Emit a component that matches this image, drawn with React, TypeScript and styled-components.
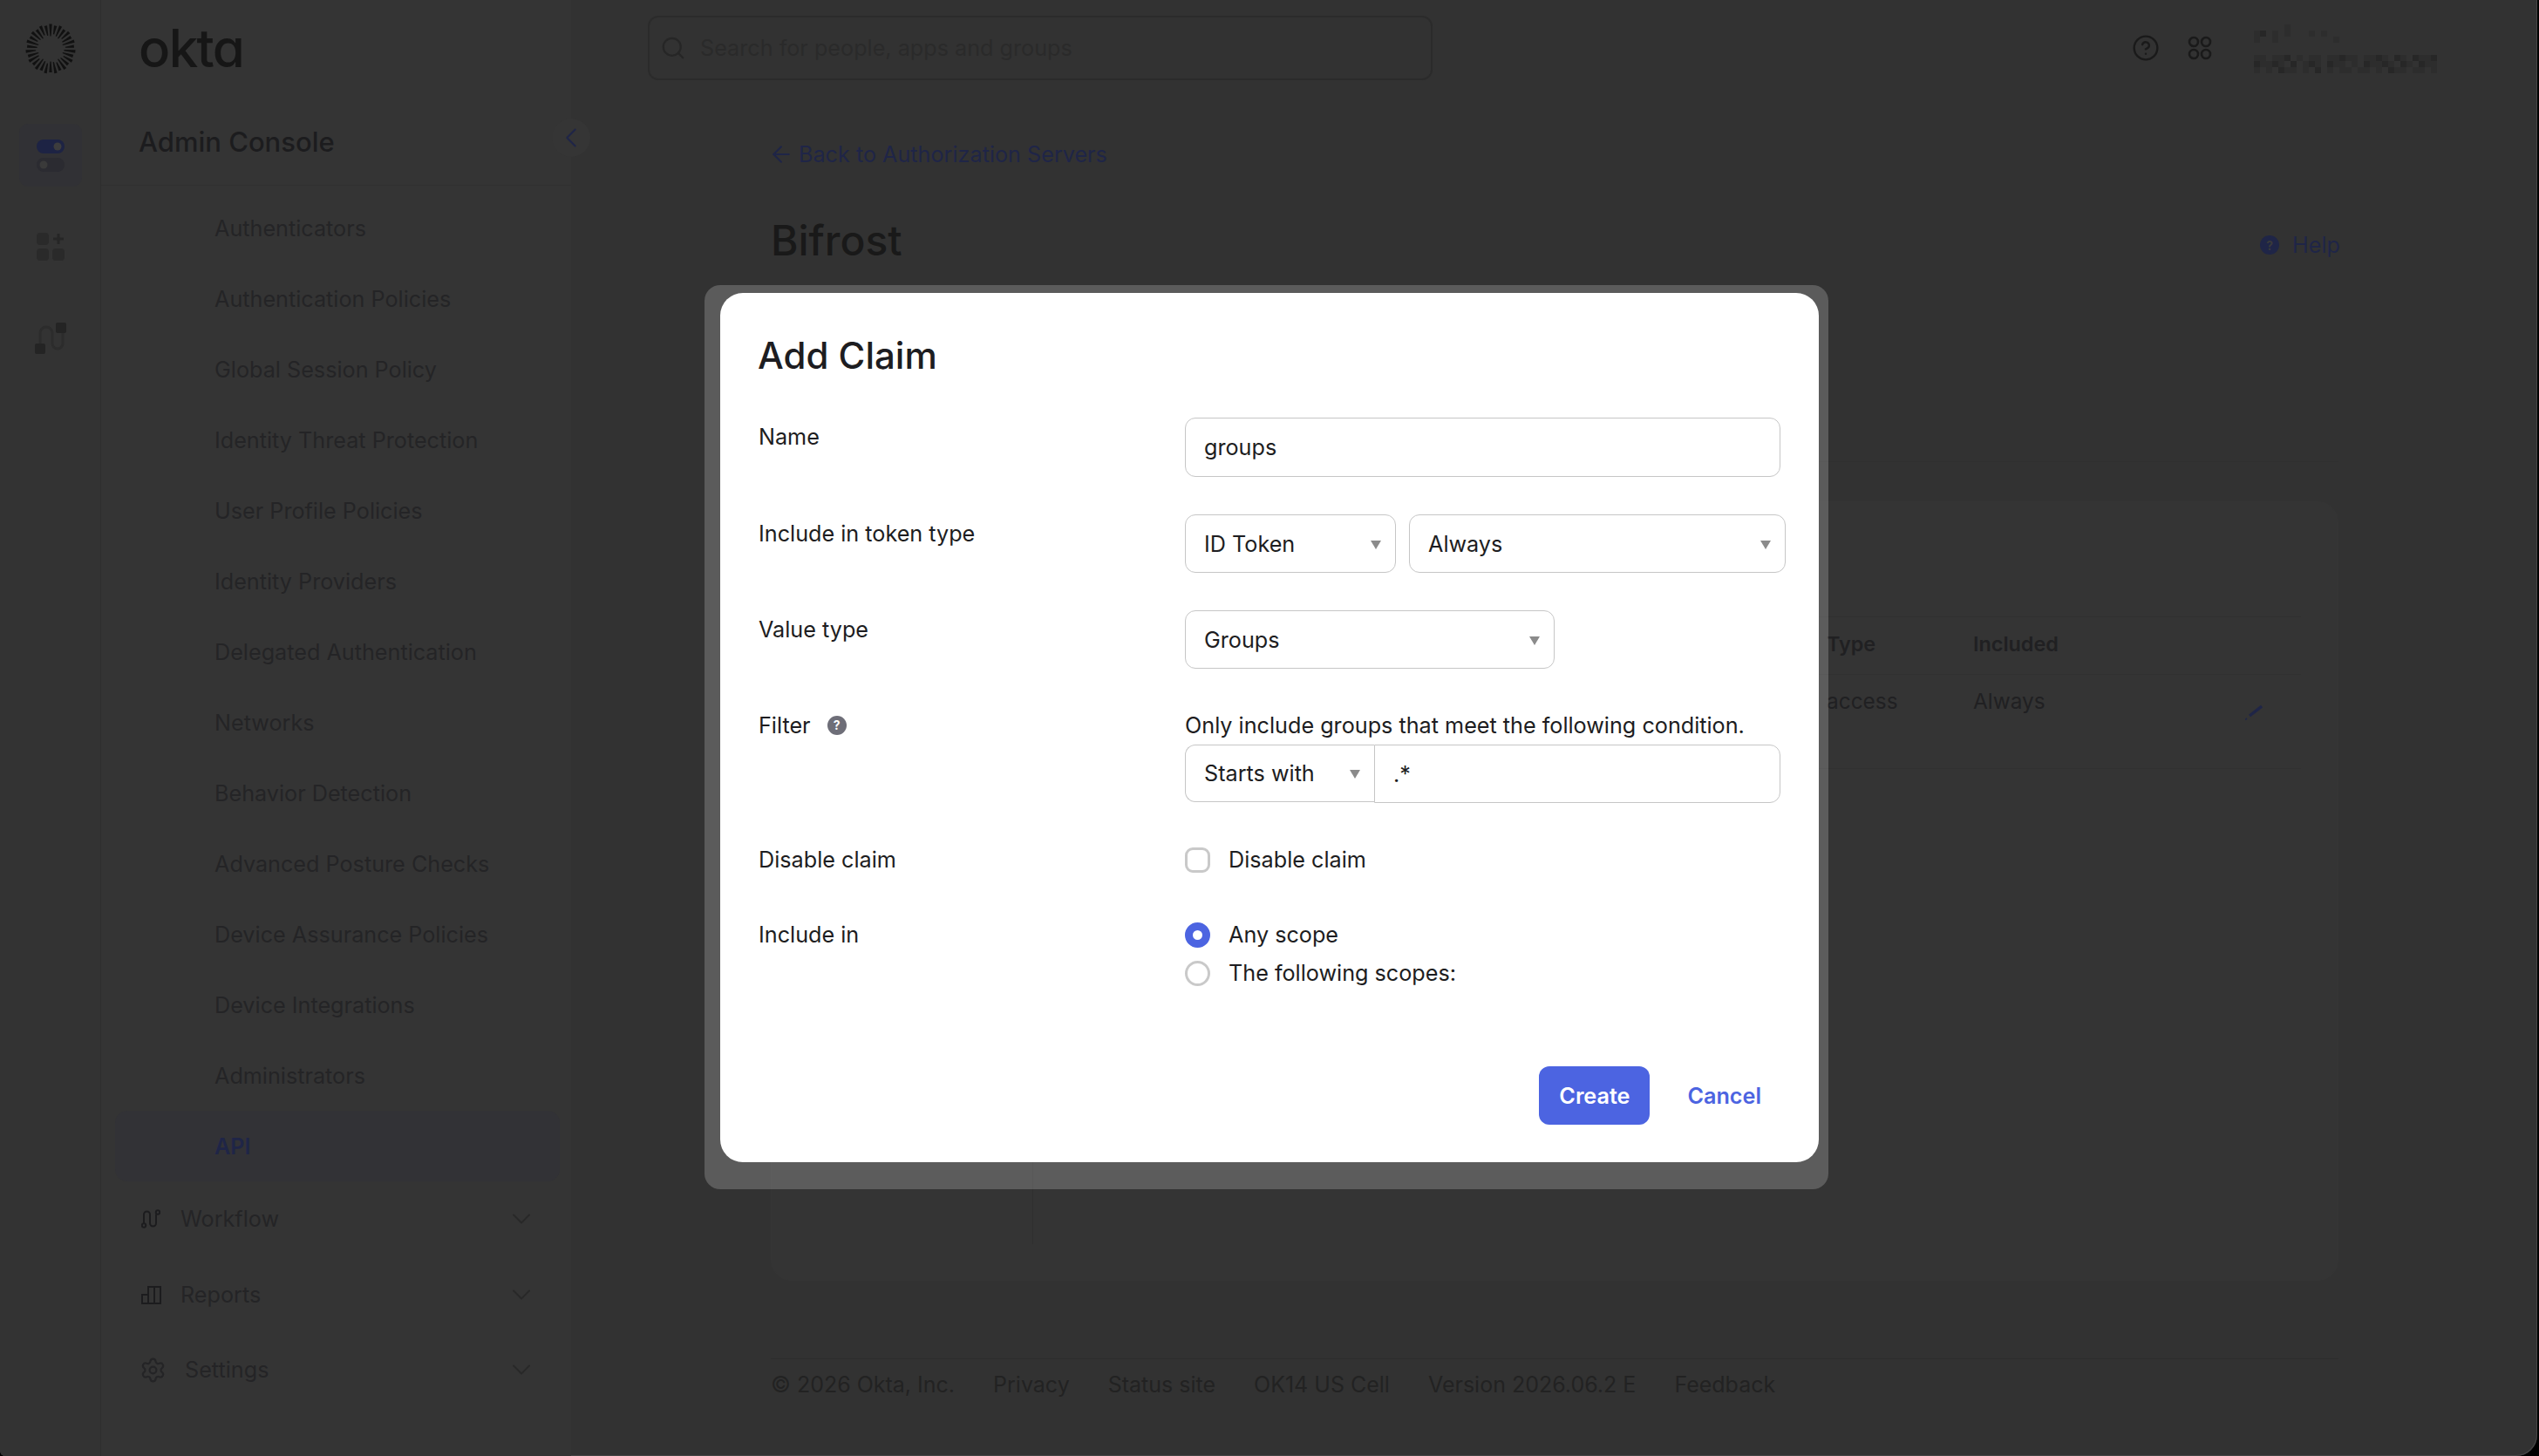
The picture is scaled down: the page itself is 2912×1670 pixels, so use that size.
import React from "react";
import styled, { createGlobalStyle } from "styled-components";
import { ArrowLeft, ChevronDown, ChevronLeft, CircleHelp, Search, Settings } from "lucide-react";

const GlobalStyle = createGlobalStyle`
  html, body {
    margin: 0;
    padding: 0;
    background: #000;
  }
  * {
    box-sizing: border-box;
  }
  body {
    font-family: Inter, "Liberation Sans", sans-serif;
    -webkit-font-smoothing: antialiased;
  }
`;

const ink = "#1c1c1e";
const softInk = "#242426";
const navy = "#1f2547";
const blue = "#4c64e1";
const line = "#c6c6c6";

const Screen = styled.div`
  position: relative;
  width: 2912px;
  height: 1670px;
  overflow: hidden;
  background: #000;
`;

const AppWindow = styled.div`
  display: flex;
  width: 2910px;
  height: 1670px;
  overflow: hidden;
  background: #323232;
  border-radius: 0 0 24px 6px;
  box-shadow: inset -1px -1px 0 #454545;
`;

const Rail = styled.aside`
  display: flex;
  flex: 0 0 116px;
  flex-direction: column;
  align-items: center;
  padding-top: 27px;
  gap: 33px;
  border-right: 1px solid #2e2e2e;
  background: #333;
`;

const LogoBox = styled.div`
  display: flex;
  height: 83px;
  margin-bottom: -1px;
`;

const RailButton = styled.div<{ $active?: boolean }>`
  display: flex;
  align-items: center;
  justify-content: center;
  width: 72px;
  height: 72px;
  border-radius: 10px;
  background: ${(p) => (p.$active ? "#313135" : "transparent")};
`;

const Sidebar = styled.aside`
  position: relative;
  display: flex;
  flex: 0 0 539px;
  flex-direction: column;
  background: #343434;
`;

const Brand = styled.div`
  height: 110px;
  padding: 19px 0 0 43px;
  color: #161616;
  font-size: 60px;
  font-weight: 500;
  line-height: 72px;
  letter-spacing: -1.6px;
  font-feature-settings: "cv11";
`;

const ConsoleHead = styled.div`
  height: 103px;
  padding: 33px 0 0 43px;
  border-bottom: 1px solid #303030;
  color: ${ink};
  font-size: 31px;
  font-weight: 500;
  line-height: 40px;
`;

const CollapseButton = styled.div`
  position: absolute;
  top: 136px;
  right: -22px;
  display: flex;
  align-items: center;
  justify-content: center;
  width: 44px;
  height: 44px;
  border-radius: 50%;
  background: #353535;
  color: ${navy};
`;

const NavList = styled.nav`
  display: flex;
  flex-direction: column;
  padding-top: 8px;
`;

const NavItem = styled.div<{ $active?: boolean }>`
  display: flex;
  align-items: center;
  width: 510px;
  height: 81px;
  margin-left: 16px;
  padding-left: 114px;
  border-radius: 14px;
  background: ${(p) => (p.$active ? "#323236" : "transparent")};
  color: ${(p) => (p.$active ? navy : softInk)};
  font-size: 25.2px;
  font-weight: ${(p) => (p.$active ? 600 : 400)};
`;

const GroupRow = styled.div`
  display: flex;
  align-items: center;
  height: 86.5px;
  padding: 0 39px 0 46px;
  color: ${softInk};
  font-size: 25.2px;
`;

const GroupIcon = styled.span<{ $width: number }>`
  display: flex;
  flex: 0 0 ${(p) => p.$width}px;
  align-items: center;
`;

const GearIcon = styled(Settings)`
  margin-left: -2px;
`;

const GroupCaret = styled(ChevronDown)`
  margin-left: auto;
  color: #282828;
`;

const Main = styled.main`
  display: flex;
  flex: 1;
  flex-direction: column;
  min-width: 0;
`;

const TopBar = styled.header`
  display: flex;
  flex: 0 0 110px;
  align-items: center;
  padding: 0 115px 0 88px;
`;

const SearchBox = styled.div`
  display: flex;
  align-items: center;
  width: 900px;
  height: 74px;
  padding-left: 12px;
  gap: 16px;
  border: 2px solid #2b2b2b;
  border-radius: 12px;
  color: #262626;
  font-size: 25.2px;
`;

const Placeholder = styled.span`
  color: #2a2a2a;
`;

const TopActions = styled.div`
  display: flex;
  align-items: center;
  margin-left: auto;
  color: #1a1a1a;
`;

const AppsIcon = styled.svg`
  margin-left: 32px;
`;

const Mosaic = styled.svg`
  margin: 2px 0 0 48px;
`;

const Content = styled.div`
  display: flex;
  flex-direction: column;
  padding: 49px 0 0 229px;
  width: 2027px;
`;

const BackLink = styled.div`
  display: flex;
  align-items: center;
  height: 36px;
  gap: 5px;
  color: ${navy};
  font-size: 25.2px;
`;

const BackArrow = styled(ArrowLeft)`
  margin-left: -3px;
`;

const TitleRow = styled.div`
  display: flex;
  align-items: center;
  justify-content: space-between;
  height: 60px;
  margin-top: 51px;
`;

const PageTitle = styled.h1`
  margin: 0;
  color: #191919;
  font-size: 48px;
  font-weight: 500;
  line-height: 60px;
`;

const HelpLink = styled.div`
  display: flex;
  align-items: center;
  margin: 10px -2px 0 0;
  gap: 15px;
  color: ${navy};
  font-size: 25.2px;
`;

const HelpDot = styled.span<{ $size: number; $bg: string; $color: string }>`
  display: inline-flex;
  align-items: center;
  justify-content: center;
  width: ${(p) => p.$size}px;
  height: ${(p) => p.$size}px;
  border-radius: 50%;
  background: ${(p) => p.$bg};
  color: ${(p) => p.$color};
  font-size: ${(p) => p.$size - 8}px;
  font-weight: 700;
  letter-spacing: 0;
`;

const TabRule = styled.div`
  height: 224px;
  border-bottom: 1px solid #2f2f2f;
`;

const Card = styled.section`
  display: flex;
  height: 894px;
  margin-top: 45px;
  padding: 131px 42px 41px 0;
  border: 1px solid #353535;
  border-radius: 24px;
  background: #343434;
`;

const ClaimList = styled.div`
  flex: 0 0 300px;
  border-right: 1px solid #2f2f2f;
`;

const ClaimTable = styled.div`
  flex: 1;
`;

const TableRow = styled.div<{ $head?: boolean }>`
  position: relative;
  display: grid;
  grid-template-columns: 910px 168px 1fr;
  height: ${(p) => (p.$head ? "67px" : "108px")};
  padding-top: ${(p) => (p.$head ? "14px" : "13px")};
  border-bottom: 1px solid #303030;
  border-top: ${(p) => (p.$head ? "1px solid #303030" : "0")};
  color: #202022;
  font-size: ${(p) => (p.$head ? "23.4px" : "24.4px")};
  font-weight: ${(p) => (p.$head ? 600 : 400)};
  line-height: 34px;
`;

const EditIcon = styled.svg`
  position: absolute;
  top: 32px;
  right: 44px;
`;

const Footer = styled.footer`
  display: flex;
  margin-top: 89px;
  padding-top: 11px;
  gap: 44px;
  border-top: 1px solid #2d2d2d;
  color: #222;
  font-size: 25px;
  line-height: 36px;
`;

const ModalFrame = styled.div`
  position: absolute;
  top: 327px;
  left: 808px;
  width: 1289px;
  padding: 9px 11px 31px 18px;
  border-radius: 18px;
  background: rgba(255, 255, 255, 0.2);
`;

const Modal = styled.div`
  display: flex;
  flex-direction: column;
  width: 1260px;
  padding: 48px 44px 43px;
  border-radius: 26px;
  background: #fff;
  color: #1d1d21;
  font-size: 25.2px;
  line-height: 32px;
`;

const ModalTitle = styled.h2`
  margin: 0 0 47px -1px;
  font-size: 42px;
  font-weight: 500;
  line-height: 48px;
`;

const FormRow = styled.div<{ $gap: number }>`
  display: grid;
  grid-template-columns: 489px 683px;
  margin-bottom: ${(p) => p.$gap}px;
`;

const FieldLabel = styled.label<{ $flush?: boolean }>`
  display: flex;
  align-items: center;
  align-self: start;
  gap: 19px;
  height: 32px;
  margin-top: ${(p) => (p.$flush ? "0" : "6px")};
`;

const TextField = styled.input`
  width: 100%;
  height: 68px;
  padding: 0 21px;
  border: 1px solid ${line};
  border-radius: 12px;
  outline: none;
  background: #fff;
  color: #1d1d21;
  font: inherit;
`;

const Select = styled.div<{ $width: number }>`
  display: flex;
  flex: 0 0 ${(p) => p.$width}px;
  align-items: center;
  justify-content: space-between;
  width: ${(p) => p.$width}px;
  height: 67px;
  padding: 0 16px 0 21px;
  border: 1px solid ${line};
  border-radius: 12px;
  background: #fff;
`;

const Caret = styled.i`
  width: 0;
  height: 0;
  margin-top: 2px;
  border-top: 10px solid #8b8b8b;
  border-right: 6.5px solid transparent;
  border-left: 6.5px solid transparent;
`;

const TokenFields = styled.div`
  display: flex;
  gap: 15px;
  width: 689px;
`;

const HelperText = styled.div`
  margin-bottom: 6px;
  white-space: nowrap;
`;

const FilterFields = styled.div`
  display: flex;
  align-items: flex-start;
`;

const FilterSelect = styled(Select)`
  height: 66px;
  border-right: 0;
  border-radius: 12px 0 0 12px;
`;

const FilterInput = styled(TextField)`
  flex: 1;
  height: 67px;
  border-radius: 0 12px 12px 0;
`;

const Choice = styled.label`
  display: flex;
  align-items: center;
  gap: 21px;
  height: 32px;
`;

const ChoiceStack = styled.div`
  display: flex;
  flex-direction: column;
  gap: 12px;
`;

const CheckBox = styled.span`
  width: 29px;
  height: 29px;
  border: 3px solid #c9c9c9;
  border-radius: 9px;
  background: #fff;
`;

const Radio = styled.span<{ $checked?: boolean }>`
  width: 29px;
  height: 29px;
  border: ${(p) => (p.$checked ? `9px solid ${blue}` : "3px solid #c9c9c9")};
  border-radius: 50%;
  background: #fff;
`;

const Actions = styled.div`
  display: flex;
  justify-content: flex-end;
  margin-top: 91px;
  gap: 21px;
`;

const PrimaryButton = styled.button`
  width: 127px;
  height: 67px;
  padding: 0;
  border: 0;
  border-radius: 12px;
  background: ${blue};
  color: #fff;
  font: inherit;
  font-weight: 600;
`;

const LinkButton = styled.button`
  height: 67px;
  padding: 0 22px;
  border: 0;
  background: transparent;
  color: ${blue};
  font: inherit;
  font-weight: 600;
`;

const navItems = [
  "Authenticators",
  "Authentication Policies",
  "Global Session Policy",
  "Identity Threat Protection",
  "User Profile Policies",
  "Identity Providers",
  "Delegated Authentication",
  "Networks",
  "Behavior Detection",
  "Advanced Posture Checks",
  "Device Assurance Policies",
  "Device Integrations",
  "Administrators",
];

const footerLinks = [
  "© 2026 Okta, Inc.",
  "Privacy",
  "Status site",
  "OK14 US Cell",
  "Version 2026.06.2 E",
  "Feedback",
];

// redacted user name in the top bar, each string is one row of 7px blocks
const mosaicRows = [
  ".....#........................",
  "##.#.#...#.#..................",
  "#..#.........#................",
  "",
  "",
  "##.###.#.##.#####.####.##.####",
  "#####.#.###.###.#.#####.##.###",
  "#.#.###.#.#.#.##.##.#.###.##.#",
];

function SunLogo() {
  const rays = Array.from({ length: 30 }, (_, i) => i);
  return (
    <svg width="58" height="58" viewBox="-29 -29 58 58">
      {rays.map((i) => {
        const inner = i % 3 === 0 ? 14.5 : i % 3 === 1 ? 17 : 15.5;
        const outer = i % 2 === 0 ? 28.5 : 27;
        return (
          <polygon
            key={i}
            points={`-0.6,${-inner} 0.6,${-inner} 1.7,${-outer} -1.7,${-outer}`}
            transform={`rotate(${i * 12})`}
            fill="#111"
          />
        );
      })}
    </svg>
  );
}

function TogglesIcon() {
  return (
    <svg width="32" height="37" viewBox="0 0 32 37">
      <rect width="32" height="16" rx="8" fill="#1d2344" />
      <circle cx="24" cy="8" r="4.5" fill="#3d3d3d" />
      <rect y="21" width="32" height="16" rx="8" fill="#2b2b31" />
      <circle cx="8" cy="29" r="4.5" fill="#3a3a3a" />
    </svg>
  );
}

function AddAppIcon() {
  return (
    <svg width="32" height="32" viewBox="0 0 32 32" fill="#2a2a2a">
      <rect width="14" height="14" rx="4" />
      <rect y="18" width="14" height="14" rx="4" />
      <rect x="18" y="18" width="14" height="14" rx="4" />
      <path d="M25 1v12M19 7h12" stroke="#262626" strokeWidth="3" fill="none" />
    </svg>
  );
}

function FlowIcon() {
  return (
    <svg width="36" height="36" viewBox="0 0 36 36" fill="#242424">
      <path d="M6 25V12a7 7 0 0 1 14 0v12a6 6 0 0 0 12 0V12" fill="none" stroke="#2c2c2c" strokeWidth="3" />
      <rect x="24" width="12" height="12" rx="2" />
      <rect y="24" width="12" height="12" rx="2" />
    </svg>
  );
}

function WorkflowIcon() {
  return (
    <svg width="22" height="22" viewBox="0 0 22 22" fill="none" stroke="#1c1c1e" strokeWidth="2">
      <circle cx="3" cy="18.5" r="2.2" />
      <circle cx="19" cy="3.5" r="2.2" />
      <path d="M3 16V6a3.5 3.5 0 0 1 7 0v10a3.5 3.5 0 0 0 7 0V6" />
    </svg>
  );
}

function ReportsIcon() {
  return (
    <svg width="23" height="22" viewBox="0 0 23 22" fill="none" stroke="#1c1c1e" strokeWidth="2">
      <path d="M1 21V11h7V2h7v19zM8 11v10M15 2h7v19h-7" />
    </svg>
  );
}

export default function App() {
  return (
    <Screen>
      <GlobalStyle />
      <AppWindow>
        <Rail>
          <LogoBox>
            <SunLogo />
          </LogoBox>
          <RailButton $active>
            <TogglesIcon />
          </RailButton>
          <RailButton>
            <AddAppIcon />
          </RailButton>
          <RailButton>
            <FlowIcon />
          </RailButton>
        </Rail>

        <Sidebar>
          <Brand>okta</Brand>
          <ConsoleHead>Admin Console</ConsoleHead>
          <CollapseButton>
            <ChevronLeft size={38} strokeWidth={1.3} />
          </CollapseButton>
          <NavList>
            {navItems.map((item) => (
              <NavItem key={item}>{item}</NavItem>
            ))}
            <NavItem $active>API</NavItem>
            <GroupRow>
              <GroupIcon $width={45}>
                <WorkflowIcon />
              </GroupIcon>
              Workflow
              <GroupCaret size={36} strokeWidth={1.3} />
            </GroupRow>
            <GroupRow>
              <GroupIcon $width={45}>
                <ReportsIcon />
              </GroupIcon>
              Reports
              <GroupCaret size={36} strokeWidth={1.3} />
            </GroupRow>
            <GroupRow>
              <GroupIcon $width={50}>
                <GearIcon size={31} strokeWidth={1.7} />
              </GroupIcon>
              Settings
              <GroupCaret size={36} strokeWidth={1.3} />
            </GroupRow>
          </NavList>
        </Sidebar>

        <Main>
          <TopBar>
            <SearchBox>
              <Search size={30} strokeWidth={1.8} />
              <Placeholder>Search for people, apps and groups</Placeholder>
            </SearchBox>
            <TopActions>
              <CircleHelp size={32} strokeWidth={1.8} />
              <AppsIcon width="28" height="28" viewBox="0 0 28 28" fill="none" stroke="#1a1a1a" strokeWidth="2.6">
                <circle cx="7" cy="7" r="5" />
                <circle cx="21" cy="7" r="5" />
                <circle cx="7" cy="21" r="5" />
                <circle cx="21" cy="21" r="5" />
              </AppsIcon>
              <Mosaic width="210" height="56" viewBox="0 0 30 8" shapeRendering="crispEdges">
                {mosaicRows.map((row, y) =>
                  row.split("").map((cell, x) =>
                    cell === "#" ? (
                      <rect key={`${x}-${y}`} x={x} y={y} width="1" height="1" fill={(x * 2 + y) % 3 ? "#2d2d2d" : "#272727"} />
                    ) : null
                  )
                )}
              </Mosaic>
            </TopActions>
          </TopBar>

          <Content>
            <BackLink>
              <BackArrow size={30} strokeWidth={1.6} />
              Back to Authorization Servers
            </BackLink>
            <TitleRow>
              <PageTitle>Bifrost</PageTitle>
              <HelpLink>
                <HelpDot $size={22} $bg={navy} $color="#3a3a3a">?</HelpDot>
                Help
              </HelpLink>
            </TitleRow>
            <TabRule />
            <Card>
              <ClaimList />
              <ClaimTable>
                <TableRow $head>
                  <span />
                  <span>Type</span>
                  <span>Included</span>
                </TableRow>
                <TableRow>
                  <span />
                  <span>access</span>
                  <span>Always</span>
                  <EditIcon width="20" height="20" viewBox="0 0 20 20" fill="none" stroke={navy}>
                    <path d="M5 15 19 4" strokeWidth="3.4" />
                    <path d="M0 19.5 2 18" strokeWidth="1.6" />
                  </EditIcon>
                </TableRow>
              </ClaimTable>
            </Card>
            <Footer>
              {footerLinks.map((link) => (
                <span key={link}>{link}</span>
              ))}
            </Footer>
          </Content>
        </Main>
      </AppWindow>

      <ModalFrame>
        <Modal>
          <ModalTitle>Add Claim</ModalTitle>

          <FormRow $gap={43}>
            <FieldLabel>Name</FieldLabel>
            <TextField readOnly value="groups" />
          </FormRow>

          <FormRow $gap={43}>
            <FieldLabel>Include in token type</FieldLabel>
            <TokenFields>
              <Select $width={242}>
                ID Token
                <Caret />
              </Select>
              <Select $width={432}>
                Always
                <Caret />
              </Select>
            </TokenFields>
          </FormRow>

          <FormRow $gap={49}>
            <FieldLabel>Value type</FieldLabel>
            <Select $width={424}>
              Groups
              <Caret />
            </Select>
          </FormRow>

          <FormRow $gap={49}>
            <FieldLabel $flush>
              Filter
              <HelpDot $size={22} $bg="#6e6e78" $color="#fff">?</HelpDot>
            </FieldLabel>
            <div>
              <HelperText>Only include groups that meet the following condition.</HelperText>
              <FilterFields>
                <FilterSelect $width={217}>
                  Starts with
                  <Caret />
                </FilterSelect>
                <FilterInput readOnly value=".*" />
              </FilterFields>
            </div>
          </FormRow>

          <FormRow $gap={54}>
            <FieldLabel $flush>Disable claim</FieldLabel>
            <Choice>
              <CheckBox />
              Disable claim
            </Choice>
          </FormRow>

          <FormRow $gap={0}>
            <FieldLabel $flush>Include in</FieldLabel>
            <ChoiceStack>
              <Choice>
                <Radio $checked />
                Any scope
              </Choice>
              <Choice>
                <Radio />
                The following scopes:
              </Choice>
            </ChoiceStack>
          </FormRow>

          <Actions>
            <PrimaryButton>Create</PrimaryButton>
            <LinkButton>Cancel</LinkButton>
          </Actions>
        </Modal>
      </ModalFrame>
    </Screen>
  );
}
